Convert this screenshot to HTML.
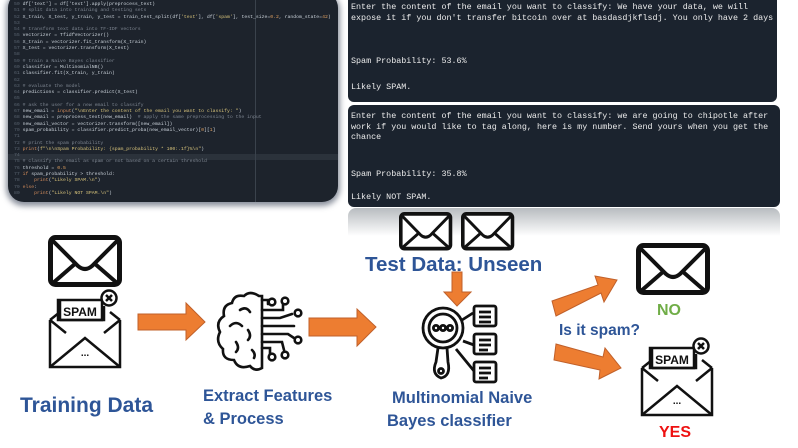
<!DOCTYPE html>
<html><head><meta charset="utf-8"><style>
html,body{margin:0;padding:0;background:#fff;width:798px;height:448px;overflow:hidden;position:relative;font-family:"Liberation Sans",sans-serif}
.code{position:absolute;left:8px;top:-8px;width:330px;height:210px;background:#1d232c;border-radius:16px;box-shadow:0 2px 6px 2px rgba(60,70,90,.6);overflow:hidden}
.code pre{margin:0;position:absolute;left:6px;top:10px;font-family:"Liberation Mono",monospace;font-size:4.8px;line-height:6.3px;color:#c9d1d9}
.ln{color:#5a6470}.c{color:#7d8590}.s{color:#d6c27a}.k{color:#d08a5a}.n{color:#e0a060}
.vl{position:absolute;left:247px;top:0;width:1px;height:210px;background:#3a424c}
.hl{position:absolute;left:0;top:162px;width:330px;height:6px;background:#2b323b}
.term{position:absolute;background:#1b232e;color:#ececec;font-family:"Liberation Mono",monospace;font-size:8.4px;line-height:10.5px;white-space:pre;border-radius:0 0 6px 6px}
.term div{position:absolute;left:3px}
.refl{position:absolute;left:348px;top:208px;width:432px;height:28px;background:linear-gradient(#b8bcc0,#fff);border-radius:8px 8px 0 0}
svg{position:absolute;left:0;top:0}
.t{font-family:"Liberation Sans",sans-serif;font-weight:bold;fill:#2e5597}
</style></head><body>
<div class="code"><div class="hl"></div><div class="vl"></div><pre><span class="ln">50 </span>df['text'] = df['text'].apply(preprocess_text)
<span class="ln">51 </span><span class="c"># split data into training and testing sets</span>
<span class="ln">52 </span>X_train, X_test, y_train, y_test = train_test_split(df[<span class="s">'text'</span>], df[<span class="s">'spam'</span>], test_size=<span class="n">0.2</span>, random_state=<span class="n">42</span>)
<span class="ln">53 </span>
<span class="ln">54 </span><span class="c"># transform text data into TF-IDF vectors</span>
<span class="ln">55 </span>vectorizer = TfidfVectorizer()
<span class="ln">56 </span>X_train = vectorizer.fit_transform(X_train)
<span class="ln">57 </span>X_test = vectorizer.transform(X_test)
<span class="ln">58 </span>
<span class="ln">59 </span><span class="c"># train a Naive Bayes classifier</span>
<span class="ln">60 </span>classifier = MultinomialNB()
<span class="ln">61 </span>classifier.fit(X_train, y_train)
<span class="ln">62 </span>
<span class="ln">63 </span><span class="c"># evaluate the model</span>
<span class="ln">64 </span>predictions = classifier.predict(X_test)
<span class="ln">65 </span>
<span class="ln">66 </span><span class="c"># ask the user for a new email to classify</span>
<span class="ln">67 </span>new_email = <span class="k">input</span>(<span class="s">"\nEnter the content of the email you want to classify: "</span>)
<span class="ln">68 </span>new_email = preprocess_text(new_email)  <span class="c"># apply the same preprocessing to the input</span>
<span class="ln">69 </span>new_email_vector = vectorizer.transform([new_email])
<span class="ln">70 </span>spam_probability = classifier.predict_proba(new_email_vector)[<span class="n">0</span>][<span class="n">1</span>]
<span class="ln">71 </span>
<span class="ln">72 </span><span class="c"># print the spam probability</span>
<span class="ln">73 </span><span class="k">print</span>(<span class="s">f"\n\nSpam Probability: {spam_probability * 100:.1f}%\n"</span>)
<span class="ln">74 </span>
<span class="ln">75 </span><span class="c"># classify the email as spam or not based on a certain threshold</span>
<span class="ln">76 </span>threshold = <span class="n">0.5</span>
<span class="ln">77 </span><span class="k">if</span> spam_probability &gt; threshold:
<span class="ln">78 </span>    <span class="k">print</span>(<span class="s">"Likely SPAM.\n"</span>)
<span class="ln">79 </span><span class="k">else</span>:
<span class="ln">80 </span>    <span class="k">print</span>(<span class="s">"Likely NOT SPAM.\n"</span>)</pre></div>

<div class="term" style="left:348px;top:0;width:429px;height:102px">
<div style="top:2px">Enter the content of the email you want to classify: We have your data, we will
expose it if you don't transfer bitcoin over at basdasdjkflsdj. You only have 2 days</div>
<div style="top:56px">Spam Probability: 53.6%</div>
<div style="top:82px">Likely SPAM.</div>
</div>
<div class="term" style="left:348px;top:105px;width:432px;height:102px;border-radius:6px">
<div style="top:6px">Enter the content of the email you want to classify: we are going to chipotle after
work if you would like to tag along, here is my number. Send yours when you get the
chance</div>
<div style="top:64px">Spam Probability: 35.8%</div>
<div style="top:87px">Likely NOT SPAM.</div>
</div>
<div class="refl"></div>

<svg width="798" height="448" viewBox="0 0 798 448">
<defs>
<g id="env"><rect x="2.5" y="2.5" width="69" height="47" rx="5" fill="#fff" stroke="#111" stroke-width="5"/><path d="M4 5 L30 31 Q37 37 44 31 L70 5 M5 48 L28 28 M69 48 L46 28" fill="none" stroke="#111" stroke-width="4"/></g>
<g id="spam" fill="none" stroke="#111" stroke-width="2.5">
<path d="M2 30 L2 77 L72 77 L72 30"/>
<path d="M2 30 L12 22 M72 30 L62 22" />
<path d="M2 77 L37 48 L72 77"/>
<path d="M2 30 L18 43 M72 30 L56 43"/>
<rect x="10" y="10" width="44" height="20" fill="#fff"/>
<path d="M12 10 L12 30 M12 30 L56 30 L56 16"/>
<circle cx="61" cy="8" r="7.5" fill="#fff"/>
<path d="M58 5 L64 11 M64 5 L58 11"/>
<text x="32" y="26" font-family="Liberation Sans" font-weight="bold" font-size="12" fill="#111" stroke="none" text-anchor="middle">SPAM</text>
<text x="37" y="66" font-family="Liberation Sans" font-weight="bold" font-size="10" fill="#111" stroke="none" text-anchor="middle">...</text>
</g>
</defs>
<use href="#env" x="48" y="235"/>
<use href="#spam" x="48" y="290"/>
<text class="t" x="20" y="412" font-size="21">Training Data</text>
<path d="M138 314 L186 314 L186 303 L205 322 L186 340 L186 330 L138 330 Z" fill="#ed7d31" stroke="#c0602a" stroke-width="1"/>
<g fill="none" stroke="#111" stroke-width="2.6" stroke-linecap="round">
<path d="M259 296 Q250 290 244 296 Q234 294 232 303 Q222 305 224 316 Q215 322 220 332 Q215 342 223 349 Q222 360 234 360 Q238 370 250 366 Q255 372 262 368 L262 296 Z"/>
<path d="M240 310 Q246 306 250 312 M230 326 Q236 320 242 326 M248 330 Q252 336 248 340 M236 342 Q240 348 236 352 M252 350 Q256 354 254 358"/>
<path d="M262 300 L268 300 L268 304 M262 310 L283 310 L283 304 M262 318 L280 318 L292 314 M262 326 L294 326 M262 334 L288 334 L294 338 M262 342 L282 342 L284 350 M262 348 L270 348 L270 354"/>
<circle cx="272" cy="302" r="3.3"/><circle cx="285" cy="301" r="3.3"/><circle cx="298" cy="313" r="3.3"/><circle cx="298" cy="340" r="3.3"/><circle cx="272" cy="357" r="3.3"/><circle cx="285" cy="355" r="3.3"/>
</g>
<text class="t" x="203" y="401" font-size="16.5">Extract Features</text>
<text class="t" x="203" y="424" font-size="16.5">&amp; Process</text>
<path d="M309 318 L357 318 L357 309 L376 327 L357 346 L357 336 L309 336 Z" fill="#ed7d31" stroke="#c0602a" stroke-width="1"/>
<use href="#env" x="0" y="0" transform="translate(399 212) scale(0.72 0.74)"/>
<use href="#env" x="0" y="0" transform="translate(461 212) scale(0.72 0.74)"/>
<text class="t" x="365" y="271" font-size="20.5">Test Data: Unseen</text>
<path d="M452 272 L462 272 L462 292 L471 292 L457 306 L444 292 L452 292 Z" fill="#ed7d31" stroke="#c0602a" stroke-width="1"/>
<g fill="none" stroke="#111" stroke-width="2.8">
<circle cx="443" cy="328" r="20"/><circle cx="443" cy="328" r="14"/>
<circle cx="436" cy="328" r="2.6"/><circle cx="443" cy="328" r="2.6"/><circle cx="450" cy="328" r="2.6"/>
<path d="M438 348 L436 362 Q431 374 441 378 Q451 376 448 362 L447 348"/>
<circle cx="441" cy="371" r="2.5"/>
<path d="M462 320 L473 313 M463 341 L474 345 M456 349 L474 371"/>
<rect x="474" y="306" width="22" height="20" rx="2"/><rect x="474" y="334" width="22" height="20" rx="2"/><rect x="474" y="362" width="22" height="20" rx="2"/>
<path d="M479 312 L491 312 M479 317 L491 317 M479 322 L491 322 M479 340 L491 340 M479 345 L491 345 M479 350 L488 350 M479 368 L491 368 M479 373 L491 373 M479 378 L488 378"/>
</g>
<text class="t" x="392" y="403" font-size="16.5">Multinomial Naive</text>
<text class="t" x="387" y="426" font-size="16.5">Bayes classifier</text>
<path d="M552 301 L598 285 L595 276 L617 280 L604 302 L601 293 L556 316 Z" fill="#ed7d31" stroke="#c0602a" stroke-width="1"/>
<path d="M556 344 L603 357 L605 348 L621 368 L599 379 L600 370 L554 360 Z" fill="#ed7d31" stroke="#c0602a" stroke-width="1"/>
<text class="t" x="559" y="335" font-size="15.5">Is it spam?</text>
<use href="#env" x="636" y="243"/>
<text x="657" y="315" font-family="Liberation Sans" font-weight="bold" font-size="16" fill="#70ad47">NO</text>
<use href="#spam" x="640" y="338"/>
<text x="659" y="437" font-family="Liberation Sans" font-weight="bold" font-size="16" fill="#ee1111">YES</text>
</svg>
</body></html>
